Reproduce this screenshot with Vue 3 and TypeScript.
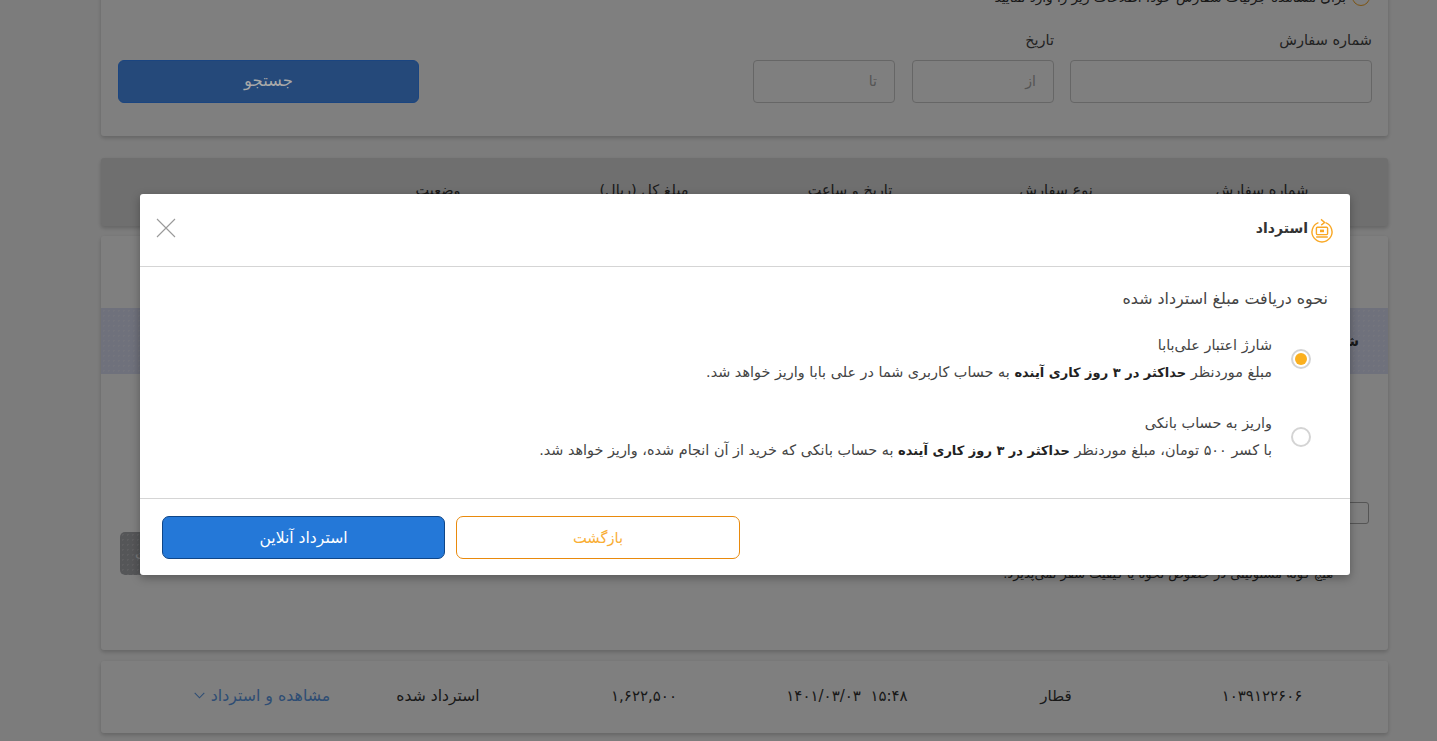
<template>
  <div class="page" dir="rtl">
    <div class="shell">
      <section class="card search">
        <div class="hint">
          <span class="hint-dot"></span>
          <span>برای مشاهده جزئیات سفارش خود، اطلاعات زیر را وارد نمایید</span>
        </div>
        <div class="search-row">
          <div class="field order-field">
            <label>شماره سفارش</label>
            <div class="input"></div>
          </div>
          <div class="field date-field">
            <label>تاریخ</label>
            <div class="date-inputs">
              <div class="input">از</div>
              <div class="input">تا</div>
            </div>
          </div>
          <button class="search-btn">جستجو</button>
        </div>
      </section>

      <div class="table-head grid-row">
        <span v-for="h in heads" :key="h">{{ h }}</span>
        <span></span>
      </div>

      <section class="card open-order">
        <div class="tinted">
          <b>شرایط استرداد</b>
        </div>
        <div class="open-body">
          <div class="check"></div>
          <div class="open-line">
            <p class="disclaimer">هیچ گونه مسئولیتی در خصوص نحوه یا کیفیت سفر نمی‌پذیرد.</p>
            <button class="dark-btn">ثبت</button>
          </div>
        </div>
      </section>

      <section class="card order-row grid-row">
        <span>۱۰۳۹۱۲۲۶۰۶</span>
        <span>قطار</span>
        <span class="order-date" dir="ltr">۱۴۰۱/۰۳/۰۳ &nbsp;۱۵:۴۸</span>
        <span>۱,۶۲۲,۵۰۰</span>
        <span>استرداد شده</span>
        <span class="view-link">
          مشاهده و استرداد
          <svg width="11" height="7" viewBox="0 0 11 7"><path d="M.7.8l4.8 5 4.8-5" fill="none" stroke="currentColor" stroke-width="1.1" /></svg>
        </span>
      </section>
    </div>

    <div class="overlay">
      <div class="modal">
        <header class="modal-head">
          <div class="modal-title">
            <svg class="refund-icon" width="24" height="26" viewBox="0 0 24 26">
              <path d="M15.6 4.6a10 10 0 1 1-7.2 0" fill="none" stroke="#f9a825" stroke-width="1.4" />
              <path d="M11 1.4l3.6 3.1-3.4 2.6" fill="none" stroke="#f9a825" stroke-width="1.4" />
              <rect x="6.4" y="9.2" width="11.2" height="7.4" rx="1" fill="none" stroke="#f9a825" stroke-width="1.4" />
              <rect x="10" y="11.6" width="4" height="2.6" fill="#f9a825" />
              <path d="M6.2 19h11.6" stroke="#f9a825" stroke-width="1.5" />
            </svg>
            <b>{{ title }}</b>
          </div>
          <svg class="close" width="20" height="20" viewBox="0 0 20 20">
            <path d="M1 1l18 18M19 1L1 19" stroke="#9a9a9a" stroke-width="1.1" fill="none" />
          </svg>
        </header>

        <div class="modal-body">
          <p class="question">نحوه دریافت مبلغ استرداد شده</p>
          <div v-for="(opt, i) in options" :key="opt.title" class="option">
            <span :class="['radio', { on: i === selected }]"></span>
            <div class="option-text">
              <div class="option-title">{{ opt.title }}</div>
              <div class="option-desc">{{ opt.before }} <b>حداکثر در ۳ روز کاری آینده</b> {{ opt.after }}</div>
            </div>
          </div>
        </div>

        <footer class="modal-foot">
          <button class="btn-back">بازگشت</button>
          <button class="btn-online">استرداد آنلاین</button>
        </footer>
      </div>
    </div>
  </div>
</template>

<script setup lang="ts">
import { ref } from 'vue'

interface RefundOption {
  title: string
  before: string
  after: string
}

const title = 'استرداد'
const selected = ref(0)
const heads = ['شماره سفارش', 'نوع سفارش', 'تاریخ و ساعت', 'مبلغ کل (ریال)', 'وضعیت']
const options: RefundOption[] = [
  {
    title: 'شارژ اعتبار علی‌بابا',
    before: 'مبلغ موردنظر',
    after: 'به حساب کاربری شما در علی بابا واریز خواهد شد.',
  },
  {
    title: 'واریز به حساب بانکی',
    before: 'با کسر ۵۰۰ تومان، مبلغ موردنظر',
    after: 'به حساب بانکی که خرید از آن انجام شده، واریز خواهد شد.',
  },
]
</script>

<style>
html,
body {
  margin: 0;
  height: 100%;
  overflow: hidden;
}
</style>

<style scoped>
.page {
  height: 741px;
  overflow: hidden;
  background: #f9f9f9;
  font-family: "DejaVu Sans", "Noto Sans", sans-serif;
  font-size: 14px;
  color: #333;
  position: relative;
}

.shell {
  width: 1287px;
  margin: -20px 49px 0 101px;
}

.card {
  background: #fff;
  border-radius: 3px;
  box-shadow: 0 2px 4px rgba(0, 0, 0, .2);
}

.search {
  height: 156px;
  padding: 0 16px 0 0;
  box-sizing: border-box;
}

.hint {
  height: 34px;
  display: flex;
  align-items: center;
  gap: 6px;
  font-size: 13.6px;
  padding-right: 2px;
}

.hint-dot {
  width: 16px;
  height: 16px;
  border: 1px solid #f9a825;
  border-radius: 50%;
}

.search-row {
  display: flex;
  align-items: flex-end;
  margin-top: 14px;
}

.field label {
  display: block;
  line-height: 24px;
  margin-bottom: 8px;
  font-size: 14.5px;
  color: #444;
}

.input {
  height: 43px;
  border: 1px solid #ccc;
  border-radius: 4px;
  box-sizing: border-box;
  padding: 0 17px;
  line-height: 41px;
  color: #aaa;
  font-size: 14px;
}

.order-field {
  width: 302px;
  margin-left: 16px;
}

.date-inputs {
  display: flex;
  gap: 17px;
}

.date-inputs .input {
  width: 142px;
}

.search-btn {
  width: 301px;
  height: 43px;
  margin-right: 334px;
  padding: 0 0 3px;
  border: 1px solid #1b4580;
  border-radius: 6px;
  background: #25497a;
  color: #a9a9a9;
  font-family: inherit;
  font-size: 16.5px;
  position: relative;
  z-index: 2;
}

.grid-row {
  display: grid;
  grid-template-columns: repeat(5, 206px) 1fr;
  align-items: center;
  padding: 0 23px 0 88px;
  text-align: center;
  box-sizing: border-box;
}

.table-head {
  margin-top: 22px;
  height: 68px;
  background: #dedede;
  border-radius: 3px;
  box-shadow: 0 2px 4px rgba(0, 0, 0, .2);
  font-size: 14.5px;
  padding-bottom: 4px;
}

.open-order {
  margin-top: 10px;
  height: 414px;
  box-sizing: border-box;
  padding-top: 72px;
}

.tinted {
  height: 66px;
  background-color: #dfe2f8;
  background-image: radial-gradient(#e8eafa 1px, transparent 1px);
  background-size: 5px 5px;
  line-height: 66px;
  padding-right: 29px;
  font-size: 14px;
}

.open-body {
  padding: 128px 19px 0 19px;
}

.check {
  width: 130px;
  height: 22px;
  border: 1px solid #aaa;
  border-radius: 3px;
  box-sizing: border-box;
  margin-bottom: 8px;
}

.open-line {
  display: flex;
  justify-content: space-between;
  align-items: flex-start;
  height: 43px;
}

.dark-btn {
  width: 120px;
  height: 43px;
  padding: 0 0 0 15px;
  text-align: left;
  background-color: #abacb1;
  background-image: radial-gradient(#bcbdc1 1px, transparent 1px);
  background-size: 5px 5px;
  border: 0;
  border-radius: 5px;
  color: #eee;
  font-family: inherit;
  font-size: 14px;
}

.disclaimer {
  margin: 32px 36px 0 0;
  font-size: 13px;
  line-height: 20px;
}

.order-row {
  margin-top: 11px;
  height: 72px;
  font-size: 15px;
  padding-bottom: 3px;
}

.order-row span:nth-child(5) {
  font-size: 15.6px;
}

.order-date {
  margin-right: 6px;
}

.view-link {
  color: #5d9be8;
  font-size: 15.8px;
  display: inline-flex;
  align-items: center;
  justify-content: center;
  gap: 6px;
}

.overlay {
  position: absolute;
  inset: 0;
  z-index: 1;
  background: rgba(0, 0, 0, .5);
  padding: 194px 87px 0 140px;
  box-sizing: border-box;
}

.modal {
  width: 1210px;
  height: 381px;
  background: #fff;
  border-radius: 3px;
  box-shadow: 0 3px 10px rgba(0, 0, 0, .3);
  display: flex;
  flex-direction: column;
}

.modal-head {
  flex: none;
  height: 68px;
  border-bottom: 1px solid #d5d5d5;
  display: flex;
  align-items: center;
  justify-content: space-between;
  padding: 0 16px 4px 16px;
}

.modal-title {
  display: flex;
  align-items: center;
  gap: 2px;
  font-size: 14px;
  color: #333;
}

.refund-icon {
  margin-top: 5px;
}

.modal-title b {
  letter-spacing: -.3px;
}

.close {
  display: block;
}

.modal-body {
  flex: 1;
  padding: 0 22px 0 0;
}

.question {
  margin: 22px 0 18px;
  line-height: 20px;
  font-size: 15.9px;
  color: #444;
}

.option {
  display: flex;
  align-items: center;
  margin-top: 15px;
  height: 63px;
  color: #444;
}

.radio {
  width: 16px;
  height: 16px;
  flex: none;
  margin-right: 17px;
  border: 2px solid #d4d4d4;
  border-radius: 50%;
  position: relative;
  display: block;
}

.radio.on::after {
  content: '';
  position: absolute;
  inset: 2px;
  border-radius: 50%;
  background: #fbb01f;
}

.option-title {
  margin-right: 19px;
  font-size: 14.4px;
  line-height: 27px;
  color: #444;
}

.option-desc {
  margin-right: 19px;
  font-size: 14.4px;
  line-height: 27px;
  color: #444;
}

.option-desc b {
  font-size: 13px;
  color: #222;
}

.modal-foot {
  height: 77px;
  flex: none;
  border-top: 1px solid #d5d5d5;
  display: flex;
  padding: 17px 610px 0 22px;
  gap: 11px;
  box-sizing: border-box;
}

.modal-foot button {
  height: 43px;
  font-family: inherit;
  border-radius: 7px;
  padding: 0;
}

.btn-back {
  width: 284px;
  background: #fff;
  border: 1px solid #e98a0c;
  color: #f9ae35;
  font-size: 14.7px;
}

.btn-online {
  width: 283px;
  background: #2478d8;
  border: 1px solid #0f4688;
  color: #fff;
  font-size: 15.6px;
}
</style>
